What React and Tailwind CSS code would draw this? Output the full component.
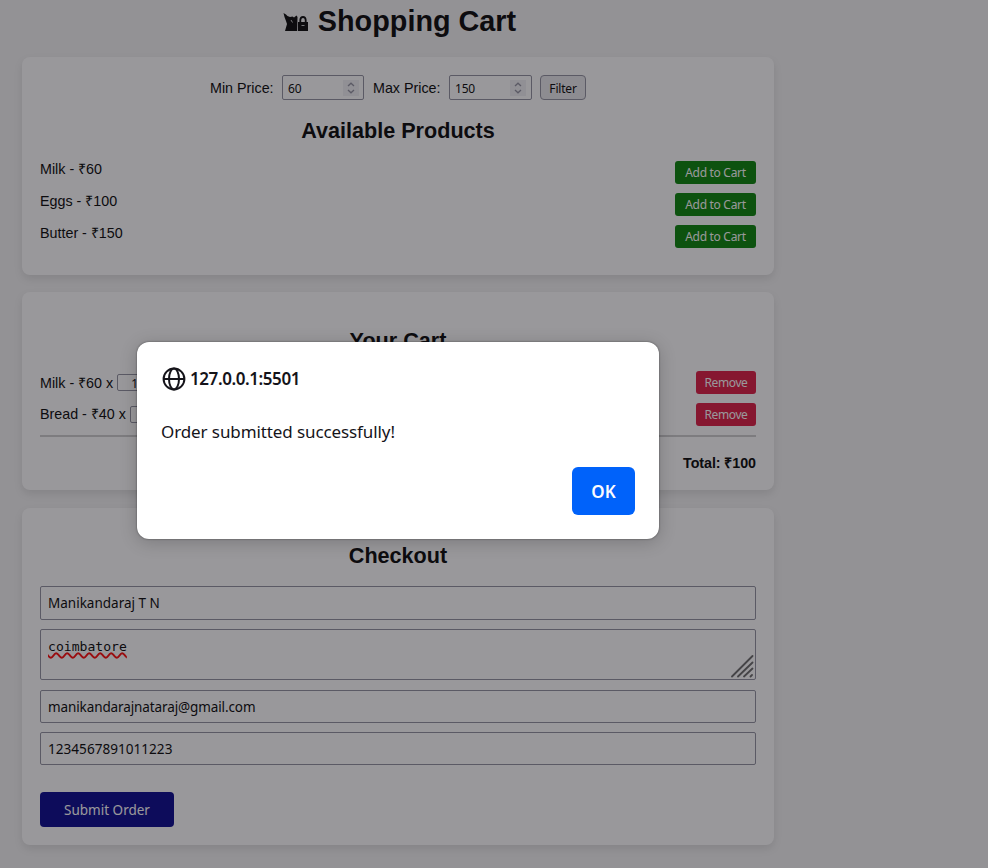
import React from "react";

const ui = "font-['Noto_Sans','Open_Sans',sans-serif]";

function Card({ className = "", children }) {
  return (
    <section className={"w-[752px] rounded-[8px] bg-white px-[18px] shadow-[0_4px_9px_rgba(0,0,0,0.1)] " + className}>
      {children}
    </section>
  );
}

function NumberField({ value, className }) {
  return (
    <div className={"flex h-[25px] items-center justify-between rounded-[2px] border border-[#8f8f9d] pl-[5px] " + className}>
      <span className={"pt-[2px] text-[12px] tracking-[-0.2px] " + ui}>{value}</span>
      <span className="flex h-[16px] w-[16px] items-center justify-center bg-[#f0f0f4]">
        <svg width="8" height="12" viewBox="0 0 8 12" fill="none" stroke="#8f8f9d" strokeWidth="1.3">
          <path d="M1 4 L4 1.2 L7 4 M1 8 L4 10.8 L7 8" />
        </svg>
      </span>
    </div>
  );
}

function Product({ label }) {
  return (
    <li className="flex h-[23px] justify-between">
      <span className="leading-[17px]">{label}</span>
      <button className={"h-[23px] w-[81px] rounded-[3px] bg-[#008000] text-[12px] leading-[23px] text-white " + ui}>
        <span className="tracking-[-0.3px]">Add to Cart</span>
      </button>
    </li>
  );
}

function CartItem({ label, qty, lineHeight }) {
  return (
    <li className="flex h-[23px] justify-between">
      <div className="flex items-start gap-[4px]">
        <span className={lineHeight}>{label}</span>
        <span className={"mt-[3px] h-[17px] w-[45px] rounded-[2px] border border-[#8f8f9d] pl-[13px] text-[12px] leading-[17px] " + ui}>{qty}</span>
      </div>
      <button className={"h-[23px] w-[60px] rounded-[3px] bg-[#dc143c] text-[12px] text-white " + ui}>
        <span className="block pt-px leading-[22px] tracking-[-0.4px]">Remove</span>
      </button>
    </li>
  );
}

function Field({ children, className }) {
  return (
    <div className={"flex items-center rounded-[2px] border border-[#8f8f9d] px-[7px] " + ui + " " + className}>
      {children}
    </div>
  );
}

export default function App() {
  return (
    <div className="relative h-[868px] w-[988px] overflow-hidden bg-[#f4f4f4] font-['Liberation_Sans',Arial,sans-serif] text-[14.3px] text-black">
      <main className="flex w-[796px] flex-col items-center">
        <h1 className="flex h-[57px] w-[752px] items-start justify-center gap-[9px] pl-[3px] pt-[4px] text-[28.8px] font-bold leading-[34px]">
          <svg className="mt-[8px]" width="26" height="20" viewBox="0 0 26 20">
            <path d="M0.5 1 L3 2.5 L4.5 4 L7 5 L9.5 4.5 L11 5.5 L13.5 3.5 L14.5 5 L14.2 19 L2 19 L4 12 L3 9 L1.5 5 Z" fill="black" />
            <path d="M15 10 H25 V19 H15 Z" fill="black" />
            <path d="M17.3 10.5 V8 Q17.5 5 20 5 Q22.5 5 22.7 8 V10.5" fill="none" stroke="black" strokeWidth="1.8" />
            <path d="M18.5 13.5 H21.5 M8 8 L9.5 10.5" fill="none" stroke="#f4f4f4" strokeWidth="0.8" />
          </svg>
          <span>Shopping Cart</span>
        </h1>

        <Card className="h-[218px] pt-[18px]">
          <div className="flex h-[25px] items-center pl-[170px]">
            <span className="w-[72px] pt-[2px]">Min Price:</span>
            <NumberField value="60" className="w-[82px] pr-[4px]" />
            <span className="ml-[9px] w-[76px] pt-[2px]">Max Price:</span>
            <NumberField value="150" className="w-[83px] pr-[5px]" />
            <button className={"ml-[8px] h-[25px] w-[46px] rounded-[4px] border border-[#8f8f9d] bg-[#e9e9ed] text-[12px] " + ui}>
              <span className="block pt-px leading-[24px] tracking-[-0.2px]">Filter</span>
            </button>
          </div>
          <h2 className="mt-[18px] text-center text-[21.6px] font-bold leading-[25px]">Available Products</h2>
          <ul className="mt-[18px] flex flex-col gap-[9px]">
            <Product label="Milk - ₹60" />
            <Product label="Eggs - ₹100" />
            <Product label="Butter - ₹150" />
          </ul>
        </Card>

        <Card className="mt-[17px] h-[198px] pt-[36px]">
          <h2 className="text-center text-[21.6px] font-bold leading-[25px]">Your Cart</h2>
          <ul className="mt-[18px] flex flex-col gap-[9px]">
            <CartItem label="Milk - ₹60 x" qty="1" lineHeight="leading-[24px]" />
            <CartItem label="Bread - ₹40 x" qty="1" lineHeight="leading-[22px]" />
          </ul>
          <div className="mt-[9px] h-[2px] bg-[#cccccc]" />
          <p className="mt-[18px] text-right font-bold leading-[17px] tracking-[-0.07px]">Total: ₹100</p>
        </Card>

        <Card className="mt-[18px] h-[337px] pt-[35px]">
          <h2 className="text-center text-[21.6px] font-bold leading-[25px]">Checkout</h2>
          <Field className="mt-[18px] h-[34px] text-[13.5px]">Manikandaraj T N</Field>
          <div className="mt-[9px] flex h-[51px] items-start justify-between rounded-[2px] border border-[#8f8f9d] pl-[7px] font-['DejaVu_Sans_Mono',monospace] text-[13.1px]">
            <span className="mt-[7px] leading-[20px] underline decoration-[#ff0000] decoration-wavy decoration-[1.5px] underline-offset-[1px]">coimbatore</span>
            <svg className="mr-px self-end" width="24" height="24" viewBox="0 0 24 24" fill="none" stroke="#666" strokeWidth="1.8" strokeLinecap="round">
              <path d="M2 21.5 L22.5 1 M8 21.5 L22.5 7.5 M14 21.5 L22.5 13.5 M20.5 21.5 L22 20" />
            </svg>
          </div>
          <Field className="mt-[10px] h-[33px] pt-[2px] text-[13.5px] tracking-[-0.11px]">manikandarajnataraj@gmail.com</Field>
          <Field className="mt-[9px] h-[33px] pt-[2px] text-[13.6px]">1234567891011223</Field>
          <button className={"mt-[27px] h-[35px] w-[134px] rounded-[4px] bg-[#00008b] pt-[2px] text-[13.5px] text-white " + ui}>Submit Order</button>
        </Card>
      </main>

      <div className="absolute inset-0 bg-[rgba(28,27,34,0.45)]" />
      <div className={"absolute left-[137px] top-[342px] flex h-[197px] w-[522px] flex-col rounded-[12px] bg-white px-[24px] pt-[24px] text-[#15141a] shadow-[0_0_2px_rgba(0,0,0,0.5),0_3px_18px_rgba(0,0,0,0.2)] " + ui}>
        <div className="flex h-[26px] items-center gap-[4px]">
          <svg className="ml-[1px]" width="24" height="24" viewBox="0 0 24 24" fill="none" stroke="#15141a" strokeWidth="2">
            <circle cx="12" cy="12" r="10.4" />
            <ellipse cx="12" cy="12" rx="5" ry="10.4" />
            <path d="M1.6 12 H22.4" />
          </svg>
          <span className="text-[17px] font-semibold tracking-[-0.43px]">127.0.0.1:5501</span>
        </div>
        <p className="mt-[27px] text-[17px] leading-[26px] tracking-[-0.1px]">Order submitted successfully!</p>
        <button className="mt-[22px] h-[48px] w-[63px] self-end rounded-[6px] bg-[#0062fa] pt-px text-[17px] font-semibold text-[#fbfbfe]">OK</button>
      </div>
    </div>
  );
}
